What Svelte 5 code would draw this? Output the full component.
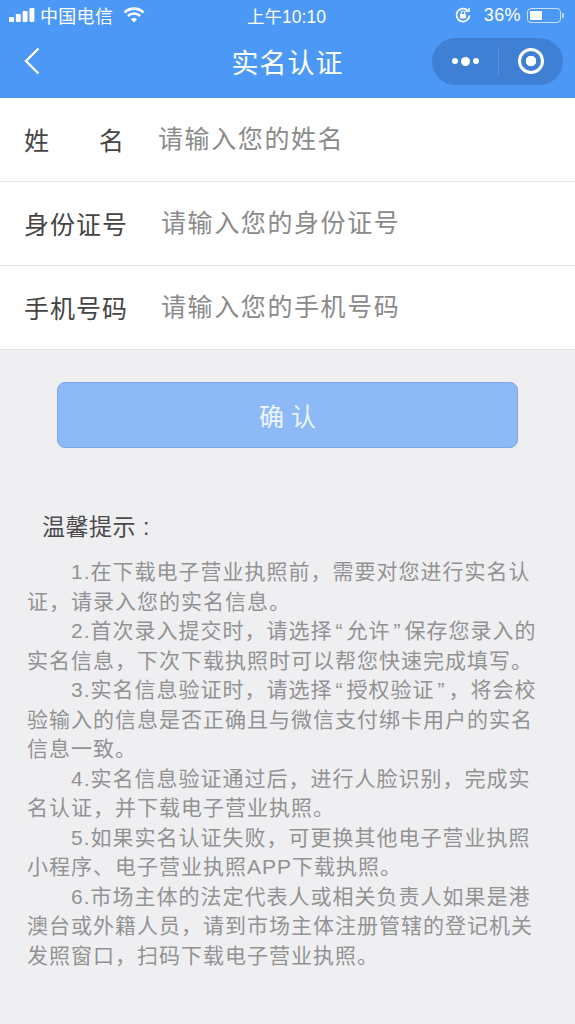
<script>
    const fields = [
        { label: '姓名', placeholder: '请输入您的姓名', spread: true },
        { label: '身份证号', placeholder: '请输入您的身份证号' },
        { label: '手机号码', placeholder: '请输入您的手机号码' }
    ];

    const tips = [
        '1.在下载电子营业执照前，需要对您进行实名认证，请录入您的实名信息。',
        '2.首次录入提交时，请选择“允许”保存您录入的实名信息，下次下载执照时可以帮您快速完成填写。',
        '3.实名信息验证时，请选择“授权验证”，将会校验输入的信息是否正确且与微信支付绑卡用户的实名信息一致。',
        '4.实名信息验证通过后，进行人脸识别，完成实名认证，并下载电子营业执照。',
        '5.如果实名认证失败，可更换其他电子营业执照小程序、电子营业执照APP下载执照。',
        '6.市场主体的法定代表人或相关负责人如果是港澳台或外籍人员，请到市场主体注册管辖的登记机关发照窗口，扫码下载电子营业执照。'
    ];

    // the quote marks are wider in the design than in our font
    const parts = (tip) => tip.split(/([“”])/);
</script>

<main>
    <header>
        <div class="status">
            <div class="status-left">
                <svg width="26" height="14" viewBox="0 0 26 14">
                    <rect x="0" y="9" width="5" height="5" rx="1.2" fill="#fff" />
                    <rect x="6.8" y="6" width="5" height="8" rx="1.2" fill="#fff" />
                    <rect x="13.6" y="3" width="5" height="11" rx="1.2" fill="#fff" />
                    <rect x="20.4" y="0" width="5" height="14" rx="1.2" fill="#fff" />
                </svg>
                <span class="carrier">中国电信</span>
                <svg class="wifi" width="22" height="16" viewBox="0 0 22 16" fill="none" stroke="#fff" stroke-width="2.6">
                    <path d="M1.5 5.5a13.5 13.5 0 0 1 19 0" />
                    <path d="M5 9a8.6 8.6 0 0 1 12 0" />
                    <path d="M11 15.5l-3-3.2a4.2 4.2 0 0 1 6 0z" fill="#fff" stroke="none" />
                </svg>
            </div>
            <div class="status-time">上午10:10</div>
            <div class="status-right">
                <svg width="18" height="18" viewBox="0 0 18 18" fill="none" stroke="#fff" stroke-width="1.7">
                    <path d="M15.5 9.5a6.5 6.5 0 1 1-2-5.2" />
                    <path d="M11.5 5l3.6.3-.2-3.4" stroke-width="1.4" />
                    <rect x="6" y="8" width="6" height="4.6" rx="0.8" fill="#fff" stroke="none" />
                    <path d="M7.2 8V6.8a1.8 1.8 0 0 1 3.6 0V8" stroke-width="1.1" />
                </svg>
                <span class="pct">36%</span>
                <div class="battery"><div class="level"></div></div>
                <div class="nub"></div>
            </div>
        </div>
        <div class="nav">
            <svg class="back" width="16" height="28" viewBox="0 0 16 28" fill="none" stroke="#fff" stroke-width="2.4">
                <path d="M14.5 1.5L2 14l12.5 12.5" />
            </svg>
            <h1>实名认证</h1>
            <div class="capsule">
                <div class="more"><i></i><i class="big"></i><i></i></div>
                <div class="divider"></div>
                <div class="target"><i></i></div>
            </div>
        </div>
    </header>

    <section class="form">
        {#each fields as field}
            <div class="row">
                <div class="label" class:spread={field.spread}>
                    {#each [...field.label] as char}<span>{char}</span>{/each}
                </div>
                <div class="placeholder">{field.placeholder}</div>
            </div>
        {/each}
    </section>

    <div class="btn-wrap">
        <div class="btn">确 认</div>
    </div>

    <section class="tips">
        <h2>温馨提示 :</h2>
        {#each tips as tip}
            <p>{#each parts(tip) as part}{#if part === '“' || part === '”'}<span class="quote">{part}</span>{:else}{part}{/if}{/each}</p>
        {/each}
    </section>
</main>

<style>
    :global(body) {
        margin: 0;
        background: #efeff2;
        font-family: "Liberation Sans", "Noto Sans CJK SC", sans-serif;
    }

    main {
        height: 1024px;
        overflow: hidden;
        background: #efeff2;
    }

    header {
        background: #4c98f7;
        height: 98px;
        color: #fff;
    }

    .status {
        height: 30px;
        padding: 0 11px 0 9px;
        display: flex;
        align-items: center;
        justify-content: space-between;
        font-size: 18px;
    }

    .status-left {
        display: flex;
        align-items: center;
        gap: 5px;
        width: 180px;
    }

    .carrier {
        letter-spacing: 0.3px;
    }

    .wifi {
        margin-left: 5px;
    }

    .status-time {
        font-size: 17.5px;
    }

    .status-right {
        display: flex;
        align-items: center;
        justify-content: flex-end;
        width: 180px;
    }

    .pct {
        margin-left: 12px;
        letter-spacing: 0.4px;
    }

    .battery {
        width: 34px;
        height: 15px;
        margin-left: 6px;
        border: 1px solid rgba(255, 255, 255, 0.7);
        border-radius: 4px;
        padding: 2px;
        box-sizing: border-box;
    }

    .level {
        width: 12px;
        height: 100%;
        background: #fff;
        border-radius: 1px;
    }

    .nub {
        width: 2px;
        height: 5px;
        margin-left: 1px;
        background: rgba(255, 255, 255, 0.6);
    }

    .nav {
        height: 62px;
        padding: 0 12px 0 24px;
        display: flex;
        align-items: center;
        justify-content: space-between;
        position: relative;
    }

    h1 {
        position: absolute;
        left: 0;
        right: 0;
        margin: 0;
        text-align: center;
        font-size: 27px;
        font-weight: 400;
        letter-spacing: 1px;
    }

    .capsule {
        width: 131px;
        height: 47px;
        border-radius: 24px;
        background: #3f7fd4;
        display: flex;
        align-items: center;
    }

    .more {
        width: 66px;
        display: flex;
        align-items: center;
        justify-content: center;
        gap: 3px;
    }

    .more i {
        width: 6px;
        height: 6px;
        border-radius: 50%;
        background: #fff;
    }

    .more i.big {
        width: 9px;
        height: 9px;
    }

    .divider {
        width: 1px;
        height: 28px;
        background: rgba(255, 255, 255, 0.15);
    }

    .target {
        flex: 1;
        display: flex;
        justify-content: center;
    }

    .target i {
        width: 26px;
        height: 26px;
        box-sizing: border-box;
        border: 3px solid #fff;
        border-radius: 50%;
        background: radial-gradient(circle, #fff 0 5px, transparent 5.5px);
    }

    .form {
        background: #fff;
    }

    .row {
        height: 84px;
        box-sizing: border-box;
        border-bottom: 1px solid #e2e2e2;
        padding: 0 0 4px 24px;
        display: flex;
        align-items: center;
    }

    .label {
        width: 137px;
        padding-top: 2px;
        font-size: 25px;
        letter-spacing: 1px;
        color: #444;
    }

    .label.spread {
        width: 100px;
        margin-right: 34px;
        letter-spacing: 0;
        display: flex;
        justify-content: space-between;
    }

    .placeholder {
        padding-bottom: 2px;
        font-size: 25px;
        letter-spacing: 1.6px;
        color: #8a8a8a;
    }

    .btn-wrap {
        padding: 32px 57px 0;
    }

    .btn {
        height: 66px;
        box-sizing: border-box;
        background: #8dbaf6;
        border: 1px solid #7aa8e6;
        border-radius: 8px;
        color: #eef4fd;
        font-size: 25px;
        padding-bottom: 1px;
        display: flex;
        align-items: center;
        justify-content: center;
    }

    .tips {
        padding: 60px 35px 0 27px;
    }

    h2 {
        margin: 0 0 15px 15px;
        font-size: 23px;
        font-weight: 400;
        letter-spacing: 0.5px;
        color: #4a4a4a;
    }

    p {
        margin: 0;
        font-size: 21px;
        letter-spacing: 1px;
        line-height: 29.5px;
        text-indent: 44px;
        color: #929292;
    }

    .quote {
        padding: 0 3px;
    }
</style>
